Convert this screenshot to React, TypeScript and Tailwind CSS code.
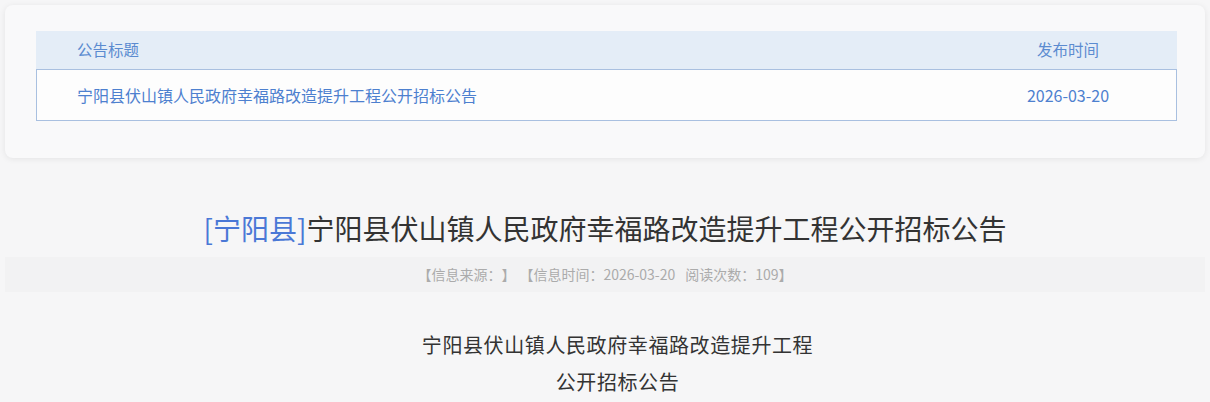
export default function App() {
  const font = { fontFamily: '"Noto Sans CJK SC", "Noto Sans", sans-serif' };

  return (
    <div className="min-h-screen bg-[#f6f6f7] p-[5px] [text-spacing-trim:space-all]" style={font}>
      {/* 公告列表 */}
      <div className="rounded-[8px] bg-[#f9f9fa] pl-[31px] pr-[28px] pt-[26px] pb-[37px] shadow-[0_1px_6px_rgba(0,0,0,0.08)]">
        <div className="flex h-[38px] items-center bg-[#e4edf7] pl-[41px] pr-[34px] text-[15.5px] text-[#5b8bd0]">
          <div className="flex-1">公告标题</div>
          <div className="w-[150px] text-center">发布时间</div>
        </div>
        <div className="flex h-[52px] items-center border border-[#a9c0e0] bg-[#fdfdfd] pl-[40px] pr-[33px] text-[16px] text-[#4d80cf]">
          <div className="flex-1">宁阳县伏山镇人民政府幸福路改造提升工程公开招标公告</div>
          <div className="w-[150px] text-center">2026-03-20</div>
        </div>
      </div>

      {/* 标题 */}
      <h1 className="mt-[50px] text-center text-[28px] leading-[40px] text-[#333333]">
        <span className="text-[#4a78d6]">[宁阳县]</span>宁阳县伏山镇人民政府幸福路改造提升工程公开招标公告
      </h1>

      <div className="mt-[9px] flex h-[35px] items-center justify-center bg-[#f2f2f3] text-[14px] text-[#ababab]">
        <span>【信息来源：】</span>
        <span className="ml-[4px]">【信息时间：2026-03-20</span>
        <span className="ml-[10px]">阅读次数：109】</span>
      </div>

      {/* 正文 */}
      <div className="mt-[34px] pl-[25px] text-center text-[20px] leading-[37px] tracking-[0.6px] text-[#333333]">
        <p>宁阳县伏山镇人民政府幸福路改造提升工程</p>
        <p>公开招标公告</p>
      </div>
    </div>
  );
}
